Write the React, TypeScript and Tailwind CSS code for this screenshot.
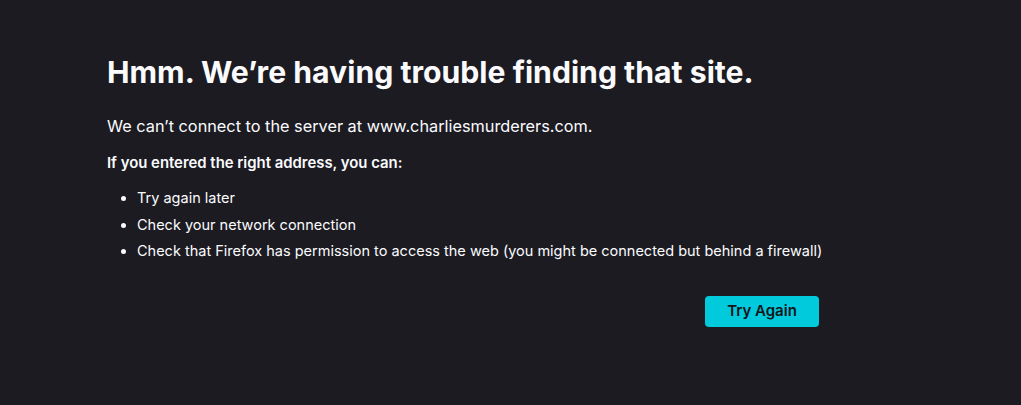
export default function App() {
  return (
    <div className="w-[1021px] h-[405px] bg-[#1c1b22] text-[#fbfbfe] overflow-hidden" style={{ fontFamily: 'Inter, "Noto Sans", sans-serif' }}>
      <div className="ml-[107px] w-[712px] pt-[53px]">
        <h1 className="text-[30.2px] leading-[38px] font-bold whitespace-nowrap">Hmm. We’re having trouble finding that site.</h1>
        <p className="mt-[23px] text-[16.3px] leading-[24px] whitespace-nowrap">We can’t connect to the server at www.charliesmurderers.com.</p>
        <p className="mt-[15px] text-[14.9px] leading-[20px] font-semibold whitespace-nowrap">If you entered the right address, you can:</p>
        <ul className="mt-[15px] ml-[17px] list-disc pl-[13px] text-[14.5px] leading-[20px] flex flex-col gap-[6.5px] whitespace-nowrap">
          <li>Try again later</li>
          <li>Check your network connection</li>
          <li>Check that Firefox has permission to access the web (you might be connected but behind a firewall)</li>
        </ul>
        <div className="mt-[35px] flex justify-end">
          <button className="w-[114px] h-[31px] rounded-[4px] bg-[#00cadb] text-[#15141a] text-[15px] font-semibold">Try Again</button>
        </div>
      </div>
    </div>
  );
}
